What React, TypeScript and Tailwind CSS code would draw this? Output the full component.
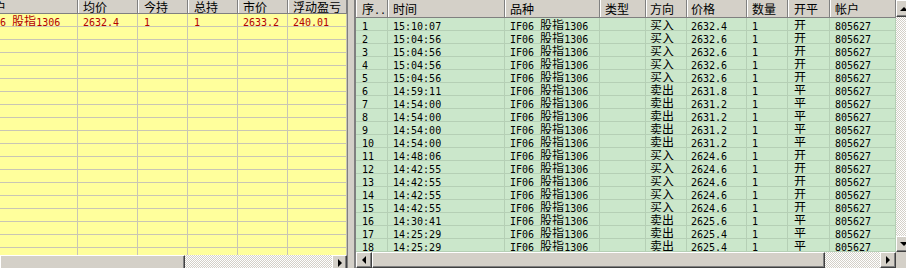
import React from "react";

const CJK_RE = /[\u3000-\u9fff\uff00-\uffef]/;

// mixes a 12px CJK face with a 6px-wide mono face, like SimSun
const Txt = ({ s }: { s: string }) => {
  const runs = s.match(/[\u3000-\u9fff\uff00-\uffef]+|[^\u3000-\u9fff\uff00-\uffef]+/g) ?? [];
  return (
    <>
      {runs.map((r, i) =>
        CJK_RE.test(r) ? (
          <span key={i} className="font-['Noto_Sans_CJK_SC',sans-serif] text-[12px]">
            {r}
          </span>
        ) : (
          <span key={i} className="font-['DejaVu_Sans_Mono',monospace] text-[10px] whitespace-pre">
            {r}
          </span>
        )
      )}
    </>
  );
};

const leftCols = [
  { t: "帐户", w: "w-[100px] pl-[4px]" },
  { t: "均价", w: "w-[60px] pl-[5px]" },
  { t: "今持", w: "w-[50px] pl-[6px]" },
  { t: "总持", w: "w-[50px] pl-[6px]" },
  { t: "市价", w: "w-[50px] pl-[5px]" },
  { t: "浮动盈亏", w: "w-[59px] pl-[5px]" },
];

const leftRows: string[][] = [
  ["IF06 股指1306", "2632.4", "1", "1", "2633.2", "240.01"],
  ...Array.from({ length: 18 }, () => ["", "", "", "", "", ""]),
];

const rightCols = [
  { t: "序..", w: "w-[32px] pl-[6px]" },
  { t: "时间", w: "w-[117px] pl-[5px]" },
  { t: "品种", w: "w-[95px] pl-[5px]" },
  { t: "类型", w: "w-[46px] pl-[5px]" },
  { t: "方向", w: "w-[41px] pl-[4px]" },
  { t: "价格", w: "w-[60px] pl-[4px]" },
  { t: "数量", w: "w-[41px] pl-[5px]" },
  { t: "开平", w: "w-[42px] pl-[6px]" },
  { t: "帐户", w: "w-[66px] pl-[5px]" },
];

const trades: [string, string, string, string, string][] = [
  ["1", "15:10:07", "买入", "2632.4", "开"],
  ["2", "15:04:56", "买入", "2632.6", "开"],
  ["3", "15:04:56", "买入", "2632.6", "开"],
  ["4", "15:04:56", "买入", "2632.6", "开"],
  ["5", "15:04:56", "买入", "2632.6", "开"],
  ["6", "14:59:11", "卖出", "2631.8", "平"],
  ["7", "14:54:00", "卖出", "2631.2", "平"],
  ["8", "14:54:00", "卖出", "2631.2", "平"],
  ["9", "14:54:00", "卖出", "2631.2", "平"],
  ["10", "14:54:00", "卖出", "2631.2", "平"],
  ["11", "14:48:06", "买入", "2624.6", "开"],
  ["12", "14:42:55", "买入", "2624.6", "开"],
  ["13", "14:42:55", "买入", "2624.6", "开"],
  ["14", "14:42:55", "买入", "2624.6", "开"],
  ["15", "14:42:55", "买入", "2624.6", "开"],
  ["16", "14:30:41", "卖出", "2625.6", "平"],
  ["17", "14:25:29", "卖出", "2625.4", "平"],
  ["18", "14:25:29", "卖出", "2625.4", "平"],
];

const raised =
  "bg-[#d4d0c8] border border-t-[#ffffff] border-l-[#ffffff] border-r-[#404040] border-b-[#404040] shadow-[inset_-1px_-1px_0_#808080]";
const checker =
  "bg-[image:repeating-conic-gradient(#d4d0c8_0_25%,#ffffff_0_50%)] bg-size-[2px_2px]";

const Arrow = ({ dir }: { dir: "left" | "right" | "up" | "down" }) => {
  const pts = {
    right: "0,0 4,4 0,8",
    left: "4,0 0,4 4,8",
    up: "0,4 4,0 8,4",
    down: "0,0 8,0 4,4",
  }[dir];
  const vert = dir === "up" || dir === "down";
  return (
    <svg width={vert ? 8 : 4} height={vert ? 4 : 8} viewBox={vert ? "0 0 8 4" : "0 0 4 8"}>
      <polygon points={pts} fill="#000" />
    </svg>
  );
};

const ScrollBtn = ({ dir, cls }: { dir: "left" | "right" | "up" | "down"; cls: string }) => (
  <div className={`${raised} ${cls} shrink-0 flex items-center justify-center`}>
    <Arrow dir={dir} />
  </div>
);

const LeftPanel = () => (
  <div className="w-[348px] h-[268px] shrink-0 flex flex-col border-r border-[#808080] overflow-hidden">
    <div className="h-[255px] shrink-0 bg-[#ffff9c] overflow-hidden">
      <div className="w-[369px] -ml-[22px]">
        <div className="flex h-[14px] bg-[#d4d0c8] border-b border-[#808080]">
          {leftCols.map((c) => (
            <div
              key={c.t}
              className={`${c.w} shrink-0 h-full leading-[13px] text-black whitespace-nowrap overflow-hidden border-r border-[#808080] shadow-[inset_1px_0_0_#ffffff]`}
            >
              <Txt s={c.t} />
            </div>
          ))}
        </div>
        {leftRows.map((row, ri) => (
          <div key={ri} className="flex h-[13px]">
            {leftCols.map((c, ci) => (
              <div
                key={ci}
                className={`${c.w} shrink-0 h-full leading-[12px] text-[#b40000] whitespace-nowrap overflow-hidden border-r border-b border-[#c9c6b4]`}
              >
                <Txt s={row[ci]} />
              </div>
            ))}
          </div>
        ))}
      </div>
    </div>
    <div className="h-[16px] shrink-0 flex">
      <div className={`${raised} w-[185px] shrink-0`} />
      <div className={`${checker} flex-1`} />
      <ScrollBtn dir="right" cls="w-[15px] h-[16px]" />
    </div>
  </div>
);

const RightPanel = () => (
  <div className="shrink-0 flex border-l-2 border-[#808080] h-[268px]">
    <div className="w-[556px] flex flex-col">
      <div className="flex h-[252px] shrink-0">
        <div className="w-[540px] shrink-0 bg-[#cbe7cb] flex flex-col">
          <div className="flex h-[18px] bg-[#d4d0c8] border-b border-[#808080]">
            {rightCols.map((c) => (
              <div
                key={c.t}
                className={`${c.w} shrink-0 h-full leading-[16px] text-black whitespace-nowrap overflow-hidden border-r border-[#808080] shadow-[inset_1px_0_0_#ffffff]`}
              >
                <Txt s={c.t} />
              </div>
            ))}
          </div>
          {trades.map((t) => {
            const cells = [t[0], t[1], "IF06 股指1306", "", t[2], t[3], "1", t[4], "805627"];
            return (
              <div key={t[0]} className="flex h-[13px]">
                {rightCols.map((c, ci) => (
                  <div
                    key={ci}
                    className={`${c.w} shrink-0 h-full leading-[12px] text-black whitespace-nowrap overflow-hidden border-r border-b border-[#b5cfb5]`}
                  >
                    <Txt s={cells[ci]} />
                  </div>
                ))}
              </div>
            );
          })}
        </div>
        <div className="w-[16px] shrink-0 flex flex-col">
          <ScrollBtn dir="up" cls="w-[16px] h-[17px]" />
          <div className={`${checker} flex-1`} />
          <ScrollBtn dir="down" cls="w-[16px] h-[16px]" />
        </div>
      </div>
      <div className="h-[16px] shrink-0 flex">
        <ScrollBtn dir="left" cls="w-[16px] h-[16px]" />
        <div className={`${raised} w-[453px] shrink-0`} />
        <div className={`${checker} flex-1`} />
        <ScrollBtn dir="right" cls="w-[16px] h-[16px]" />
        <div className="w-[16px] shrink-0 bg-[#d4d0c8]" />
      </div>
    </div>
  </div>
);

export default function App() {
  return (
    <div className="w-[906px] h-[268px] overflow-hidden flex bg-[#d4d0c8]">
      <LeftPanel />
      <div className="w-[6px] shrink-0 bg-[#d4d0c8]" />
      <RightPanel />
    </div>
  );
}
